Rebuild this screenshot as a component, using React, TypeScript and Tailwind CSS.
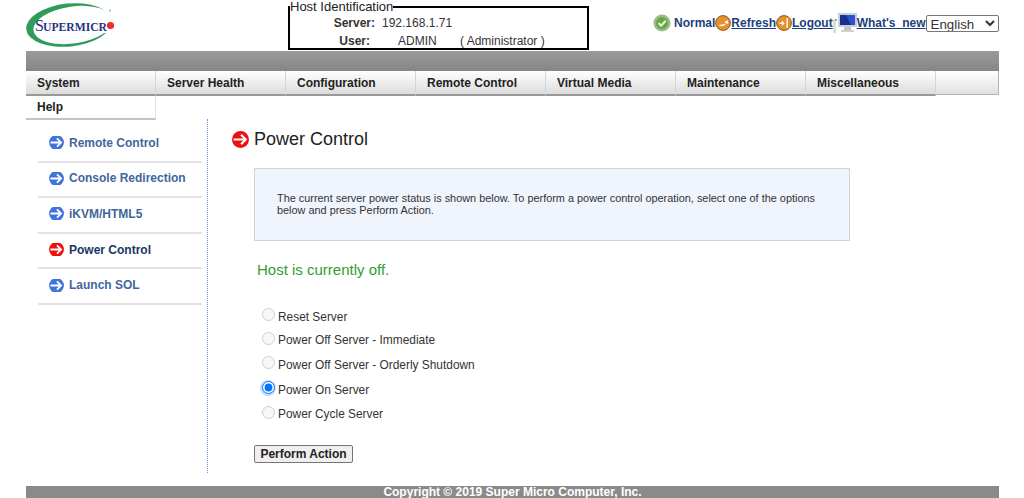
const font = { fontFamily: '"Liberation Sans", Arial, sans-serif' }

const menus = ['System', 'Server Health', 'Configuration', 'Remote Control', 'Virtual Media', 'Maintenance', 'Miscellaneous']
const sideItems = [
  { label: 'Remote Control', active: false },
  { label: 'Console Redirection', active: false },
  { label: 'iKVM/HTML5', active: false },
  { label: 'Power Control', active: true },
  { label: 'Launch SOL', active: false },
]
const options = [
  { label: 'Reset Server', on: false, h: 'h-[23px]' },
  { label: 'Power Off Server - Immediate', on: false, h: 'h-[24px]' },
  { label: 'Power Off Server - Orderly Shutdown', on: false, h: 'h-[25px]' },
  { label: 'Power On Server', on: true, h: 'h-[25px]' },
  { label: 'Power Cycle Server', on: false, h: 'h-6' },
]

function ArrowDot({ color, clipped }: { color: string; clipped?: boolean }) {
  return (
    <svg width={clipped ? 15 : 17} height={clipped ? 13 : 17} viewBox={clipped ? '0 1 16 14' : '0 0 16 16'} className="shrink-0">
      <circle cx="8" cy="8" r="8" fill={color} />
      <path d="M1.5 8H12.5M8.5 3.6 13 8 8.5 12.4" fill="none" stroke="#fff" strokeWidth="1.9" />
    </svg>
  )
}

function Logo() {
  return (
    <svg width="92" height="48" viewBox="0 0 92 48" className="shrink-0">
      <ellipse cx="44" cy="24" rx="43" ry="21.5" fill="#2f9c5a" transform="rotate(-6 44 24)" />
      <ellipse cx="48" cy="24" rx="40" ry="18.5" fill="#fff" transform="rotate(-8 48 24)" />
      <rect x="76" y="18" width="16" height="14" fill="#fff" />
      <text x="10" y="30" fill="#27337f" fontSize="16" fontFamily="Liberation Serif, serif">S</text>
      <text x="18" y="30" fill="#27337f" fontSize="12" fontFamily="Liberation Serif, serif" fontWeight="700" textLength="64" lengthAdjust="spacingAndGlyphs">UPERMICR</text>
      <circle cx="85.5" cy="24.5" r="3.6" fill="#ee2b2f" />
      <circle cx="85" cy="9.5" r="1" fill="#9aa4b0" />
    </svg>
  )
}

function StatusIcon({ kind }: { kind: 'normal' | 'refresh' | 'logout' }) {
  if (kind === 'normal') {
    return (
      <svg width="18" height="18" viewBox="0 0 18 18" className="shrink-0">
        <circle cx="9" cy="9" r="8.5" fill="#9dbb84" />
        <circle cx="9" cy="9" r="6" fill="#62a844" />
        <path d="M5.5 9l2.6 2.7 4.6-5" fill="none" stroke="#e8f4dc" strokeWidth="2" />
      </svg>
    )
  }
  return (
    <svg width="16" height="16" viewBox="0 0 16 16" className="shrink-0">
      <circle cx="8" cy="8" r="7.4" fill="#e8912a" stroke="#8a5a22" strokeWidth="1" />
      {kind === 'refresh'
        ? <path d="M3.5 10C6 12 10 11.5 11 8L9 7.5l3.5-2.5 1 3.5" fill="#fff" />
        : <path d="M3.5 7.5h2.4V5.5l2.8 2.8-2.8 2.8v-2H3.5ZM10.5 3h1.4v10h-1.4Z" fill="#fff" />}
    </svg>
  )
}

function Monitor() {
  return (
    <svg width="24" height="20" viewBox="0 0 24 20" className="shrink-0">
      <rect x="0" y="6" width="3" height="14" fill="#dcdcdc" />
      <rect x="2" y="6" width="2" height="2" fill="#8fbb7f" />
      <rect x="5" y="0" width="19" height="14" fill="#c9cfd8" />
      <rect x="7" y="2" width="15" height="10" fill="#2a54cc" />
      <path d="M7 2h6l5 10H7Z" fill="#17308f" />
      <rect x="11" y="14" width="7" height="3" fill="#c4c4c4" />
      <rect x="8" y="17" width="13" height="2" fill="#d2d2d2" />
    </svg>
  )
}

export default function App() {
  return (
    <div className="w-[1024px] h-[498px] overflow-hidden bg-white text-[#333]" style={font}>
      {/* top */}
      <div className="h-[51px] flex">
        <div className="pl-[25px] pt-[1px] w-[288px]"><Logo /></div>
        <fieldset className="w-[301px] h-[50px] border-2 border-black pl-0 m-0">
          <legend className="text-[13px] leading-[14px] ml-0 px-0 text-[#222]">Host Identification</legend>
          <div className="flex text-xs h-[18px] items-center">
            <b className="w-[85px] text-right">Server:</b>
            <span className="ml-[7px]">192.168.1.71</span>
          </div>
          <div className="flex text-xs h-[17px] items-center">
            <b className="w-[80px] text-right">User:</b>
            <span className="ml-[28px] w-[62px]">ADMIN</span>
            <span>( Administrator )</span>
          </div>
        </fieldset>
        <div className="ml-[64px] flex items-center h-[46px] text-xs font-bold text-[#1c3f7c]">
          <StatusIcon kind="normal" />
          <span className="ml-[3px]">Normal</span>
          <StatusIcon kind="refresh" />
          <span className="underline">Refresh</span>
          <StatusIcon kind="logout" />
          <span className="underline">Logout</span>
          <Monitor />
          <span className="underline">What's_new</span>
          <select className="w-[73px] h-[17px] py-0 text-[13.3px] leading-[15px] font-normal text-[#333] border border-[#767676] rounded-[2px] bg-white" style={font}>
            <option>English</option>
          </select>
        </div>
      </div>

      {/* menu */}
      <div className="ml-[26px] w-[973px]">
        <div className="h-[20px] bg-gradient-to-b from-[#9a9a9a] to-[#868686]" />
        <div className="flex h-[25px]">
          {menus.map(m => (
            <div key={m} className="w-[130px] h-[25px] pl-[11px] flex items-center text-xs font-bold text-[#222] bg-gradient-to-b from-white to-[#dcdcdc] border-r border-[#d4d4d4] border-b-2 border-b-[#999]">{m}</div>
          ))}
          <div className="flex-1 h-[24px] bg-gradient-to-b from-white to-[#e0e0e0] border-r border-b border-[#b4b4b4]" />
        </div>
        <div className="w-[130px] h-[24px] pl-[11px] flex items-center text-xs font-bold text-[#222] border-r border-[#e4e4e4] border-b-2 border-b-[#c4c4c4]">Help</div>
      </div>

      {/* body */}
      <div className="flex h-[354px] -mt-[1px]">
        <div className="ml-[38px] w-[170px] border-r border-dotted border-[#6f93dd]">
          <div className="w-[164px] pt-[8px]">
            {sideItems.map(s => (
              <div key={s.label} className="h-[35.6px] pl-[11px] pb-[2px] flex items-center gap-[5px] border-b-2 border-[#e3e3e3]">
                <ArrowDot clipped color={s.active ? '#ee1010' : '#3f74dc'} />
                <span className={`text-xs font-bold ${s.active ? 'text-[#1c3564]' : 'text-[#42669c]'}`}>{s.label}</span>
              </div>
            ))}
          </div>
        </div>

        <div className="pl-[24px] flex-1">
          <div className="flex items-center gap-[5px] h-[20px] mt-[10px]">
            <ArrowDot color="#ee1010" />
            <h1 className="text-lg text-[#222]">Power Control</h1>
          </div>
          <div className="ml-[22px] mt-[19px] w-[596px] h-[73px] bg-[#f0f4fd] border border-[#cfd3da] pl-[22px] pt-[23px] text-[10.9px] leading-[12px] text-[#333]">
            The current server power status is shown below. To perform a power control operation, select one of the options<br />
            below and press Perform Action.
          </div>
          <div className="ml-[25px] mt-[20px] text-[15px] leading-[17px] text-[#2f9e33]">Host is currently off.</div>
          <div className="ml-[22px] mt-[28px]">
            {options.map(o => (
              <label key={o.label} className={`flex items-center ${o.h}`}>
                <span className={`flex items-center justify-center w-[16px] h-[16px] ml-[6px] mr-[2px] -mt-[6px] rounded-full ${o.on ? 'bg-[#c4d9f9]' : ''}`}>
                  <input type="radio" name="power" defaultChecked={o.on} disabled={!o.on} className="w-[13px] h-[13px] m-0" />
                </span>
                <span className="text-[11.9px] text-[#333]">{o.label}</span>
              </label>
            ))}
          </div>
          <button className="ml-[22px] mt-[18px] w-[99px] h-[18px] border border-[#767676] rounded-[2px] bg-[#efefef] text-xs font-bold text-[#222] flex items-center justify-center">Perform Action</button>
        </div>
      </div>

      {/* footer */}
      <div className="ml-[26px] w-[973px] h-[13px] mt-[13px] bg-[#8a8a8a] text-center text-xs leading-[13px] font-bold text-white">Copyright © 2019 Super Micro Computer, Inc.</div>
    </div>
  )
}
